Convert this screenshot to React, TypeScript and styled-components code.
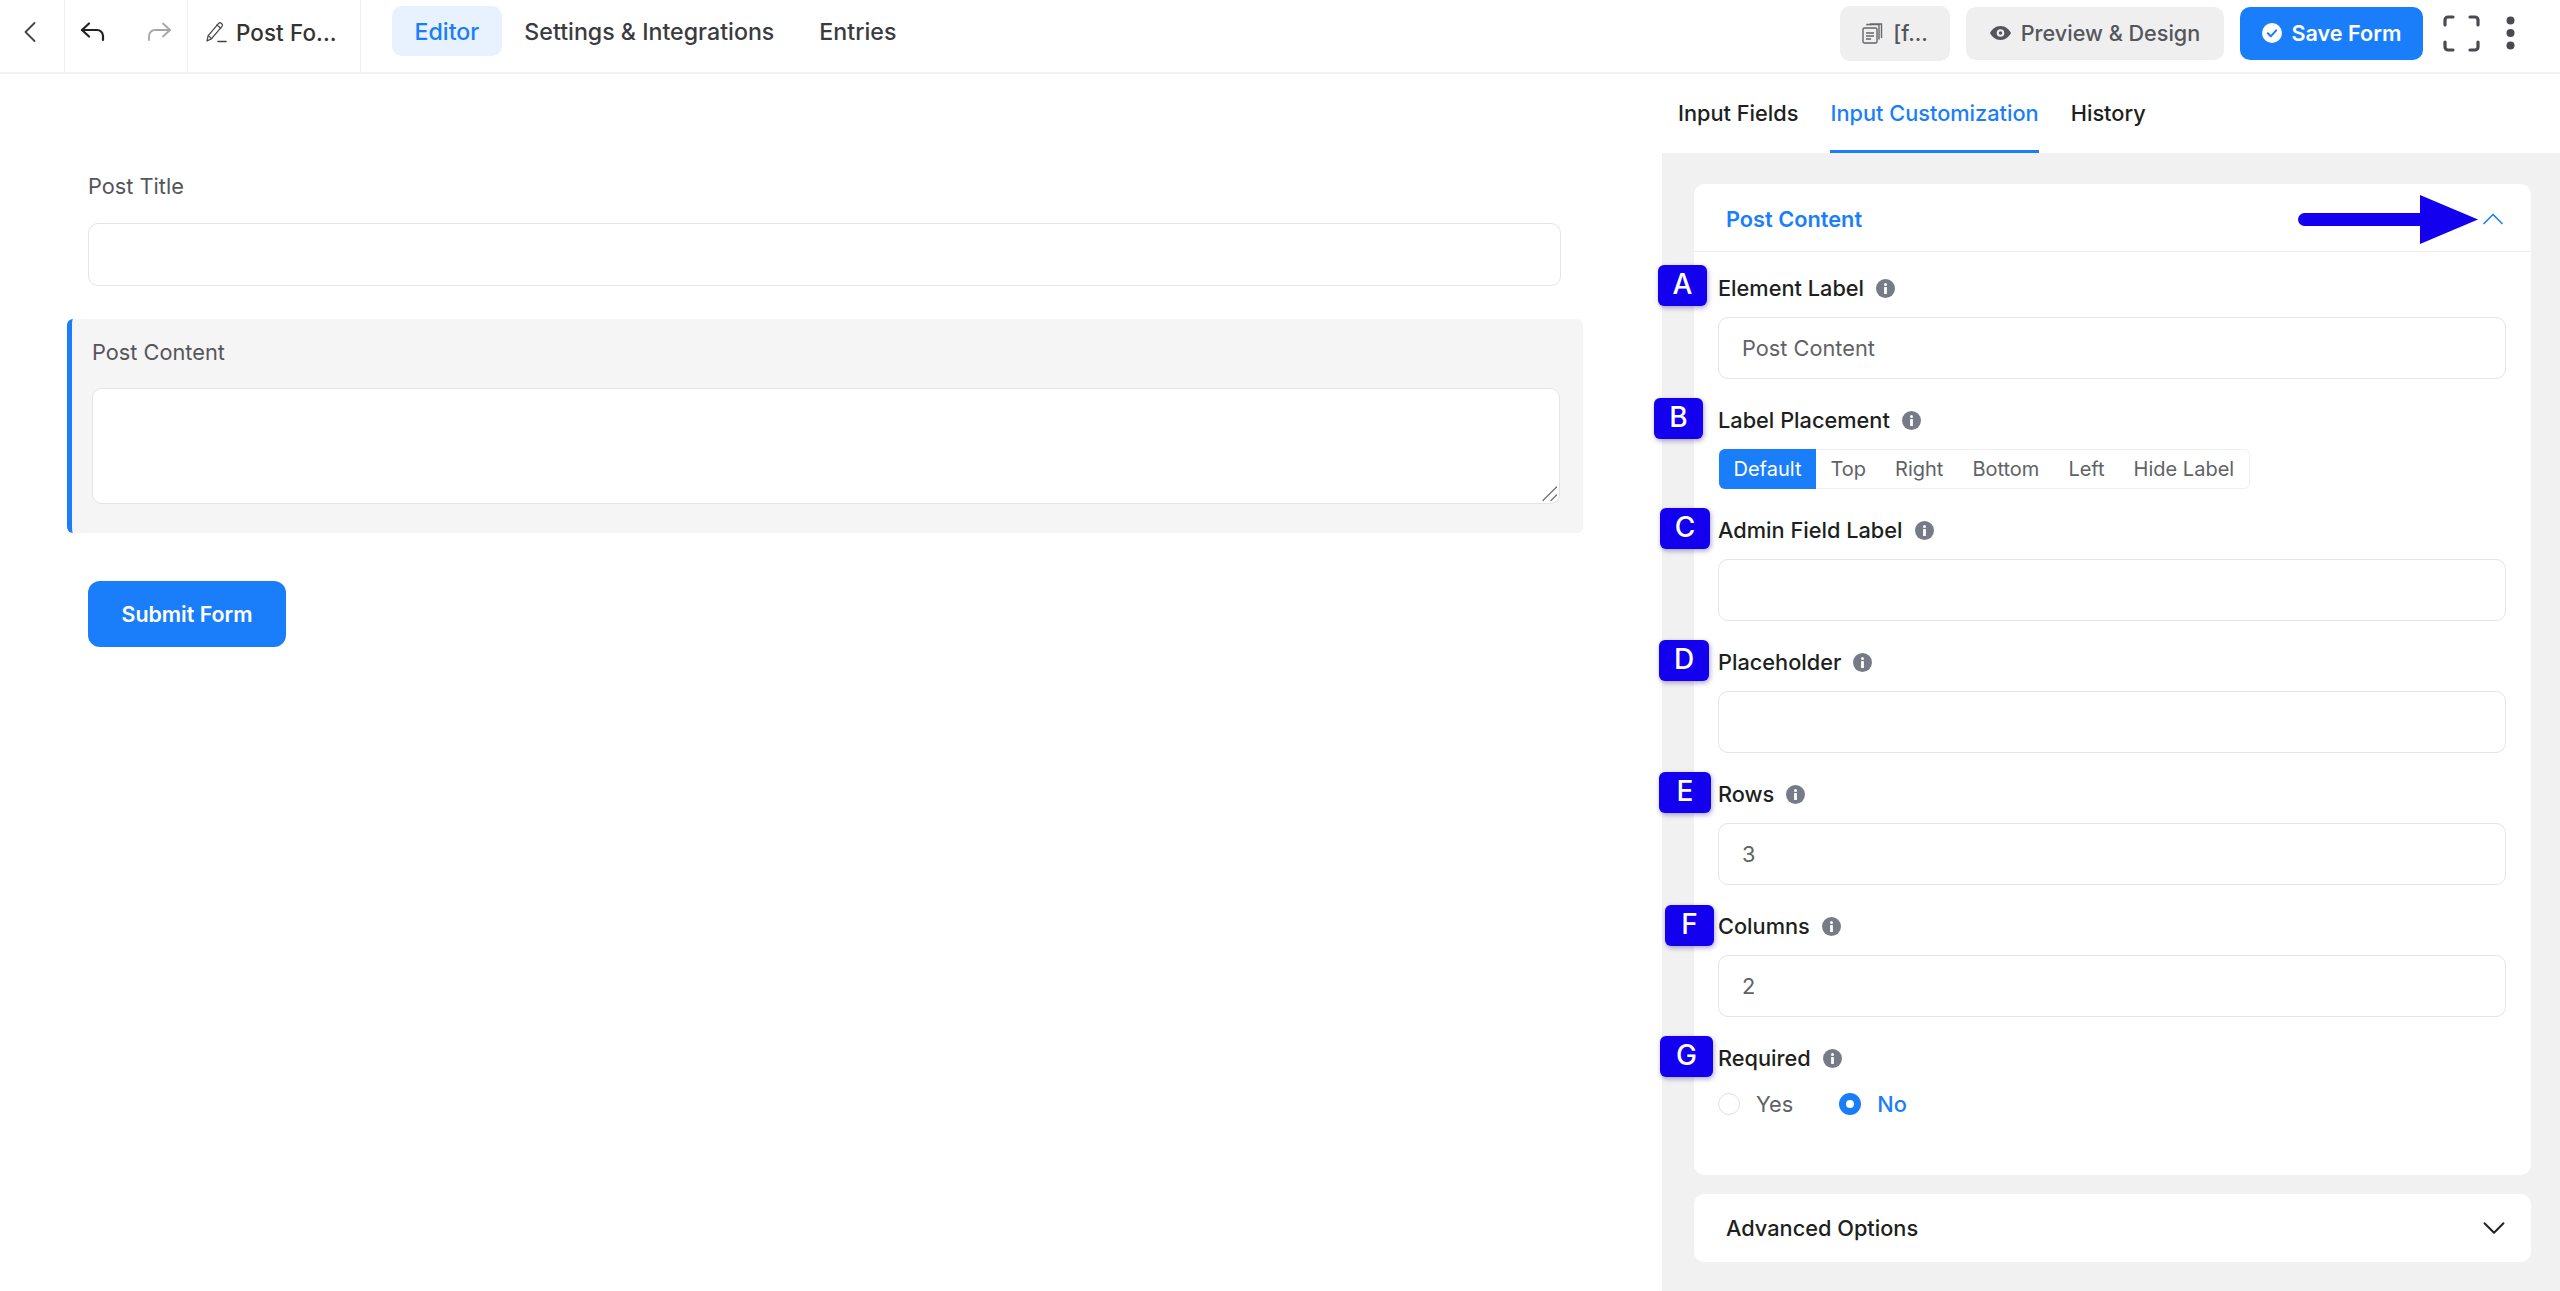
import React from "react";
import styled, { createGlobalStyle } from "styled-components";
import { ChevronLeft, ChevronUp, ChevronDown } from "lucide-react";

const Global = createGlobalStyle`
  html, body { margin: 0; padding: 0; height: 100%; background: #fff; overflow: hidden; }
  body { font-family: Inter, "Liberation Sans", sans-serif; color: #1e1f21; }
  * { box-sizing: border-box; }
`;

const Page = styled.div`display: flex; flex-direction: column; height: 100vh;`;

const Header = styled.header`
  display: flex; align-items: stretch; height: 74px; flex: none;
  border-bottom: 2px solid #f2f2f2; background: #fff;
`;
const HeaderCell = styled.div<{ $w: number; $gap?: number }>`
  width: ${p => p.$w}px; flex: none; display: flex; align-items: center;
  border-right: 1px solid #f0f0f0; gap: ${p => p.$gap ?? 0}px;
`;
const BackCell = styled(HeaderCell)`color: #444; padding: 0 0 8px 12px;`;
const HistoryCell = styled(HeaderCell)`padding: 0 0 9px 15px;`;
const TitleCell = styled(HeaderCell)`
  padding: 0 0 8px 17px;
  font-size: 22.4px; font-weight: 500; color: #333; letter-spacing: 0.1px;
`;
const Nav = styled.nav`display: flex; align-items: center; margin-left: 31px; gap: 0; padding-bottom: 10px;`;
const NavItem = styled.a<{ $active?: boolean }>`
  height: 50px; display: flex; align-items: center; padding: 2px 22.5px 0; border-radius: 10px;
  font-size: 23.2px; font-weight: 500;
  color: ${p => (p.$active ? "#1a7efb" : "#3b3b3f")};
  background: ${p => (p.$active ? "#e8f2ff" : "transparent")};
`;
const HeaderRight = styled.div`display: flex; align-items: center; margin-left: auto; padding: 0 45px 6px 0;`;
const GreyButton = styled.button<{ $w: number; $h?: number; $mr?: number }>`
  all: unset; box-sizing: border-box; display: flex; align-items: center; justify-content: center; gap: 10px;
  width: ${p => p.$w}px; height: ${p => p.$h ?? 53}px; margin-right: ${p => p.$mr ?? 16}px;
  background: #efefef; border-radius: 10px; color: #55565b; font-size: 21.6px; font-weight: 500;
`;
const SaveButton = styled.button`
  all: unset; box-sizing: border-box; display: flex; align-items: center; justify-content: center; gap: 10px;
  width: 183px; height: 53px; margin-right: 20px; border-radius: 10px;
  background: #1a7efb; color: #fff; font-size: 21.6px; font-weight: 600;
`;
const Dots = styled.svg`margin-left: 26px; flex: none;`;

const Main = styled.main`display: flex; flex: 1; min-height: 0;`;
const Canvas = styled.section`width: 1662px; flex: none; padding-top: 96px; background: #fff;`;
const FormField = styled.div`display: flex; flex-direction: column; gap: 20px; margin: 0 101px 33px 88px;`;
const FormLabel = styled.label`font-size: 21.76px; line-height: 33px; color: #55565b;`;
const FormInput = styled.input`
  height: 63px; width: 100%; border: 1px solid #e3e4e6; border-radius: 10px; background: #fff; outline: none;
`;
const SelectedField = styled.div`
  display: flex; flex-direction: column; gap: 19px;
  margin: 0 79px 48px 67px; padding: 17px 23px 30px 20px; height: 214px;
  background: #f5f5f5; border-left: 5px solid #1a7efb; border-radius: 6px;
`;
const AreaWrap = styled.div`position: relative; height: 116px; flex: none;`;
const FormArea = styled.textarea`
  height: 100%; width: 100%; border: 1px solid #e3e4e6; border-radius: 10px; background: #fff;
  outline: none; resize: none; display: block;
`;
const ResizeGrip = styled.svg`position: absolute; right: 2px; bottom: 2px;`;
const SubmitButton = styled.button`
  all: unset; box-sizing: border-box; display: flex; align-items: center; justify-content: center;
  width: 198px; height: 66px; margin-left: 88px; border-radius: 12px;
  background: #1a7efb; color: #fff; font-size: 21.4px; font-weight: 600;
`;

const Sidebar = styled.aside`flex: 1; display: flex; flex-direction: column; background: #f1f1f1;`;
const Tabs = styled.div`display: flex; height: 79px; flex: none; background: #fff; padding-left: 16px; gap: 32px;`;
const Tab = styled.a<{ $active?: boolean }>`
  display: flex; align-items: center; height: 79px; padding-top: 2px;
  font-size: 21.76px; font-weight: 500;
  color: ${p => (p.$active ? "#1a7efb" : "#1e1f21")};
  border-bottom: 3px solid ${p => (p.$active ? "#1a7efb" : "transparent")};
`;
const SideBody = styled.div`display: flex; flex-direction: column; gap: 19px; padding: 31px 29px 0 32px;`;
const Card = styled.div`position: relative; background: #fff; border-radius: 10px;`;
const CardHeader = styled.div`
  display: flex; align-items: center; justify-content: space-between; height: 68px;
  padding: 2px 20px 0 32px; border-bottom: 1px solid #eeeeee;
  font-size: 21.76px; font-weight: 600; color: #1a7efb;
`;
const Arrow = styled.svg`position: absolute; left: 604px; top: 11px;`;
const CardBody = styled.div`display: flex; flex-direction: column; gap: 26px; padding: 21px 25px 55px 24px;`;
const Field = styled.div`position: relative; display: flex; flex-direction: column; gap: 14px;`;
const LabelRow = styled.div`display: flex; align-items: center; gap: 12px; height: 30px; font-size: 21.76px; font-weight: 500; color: #1e1f21;`;
const TextInput = styled.input`
  height: 62.1px; width: 100%; padding: 0 23px; border: 1px solid #e3e4e6; border-radius: 10px; background: #fff;
  outline: none; font: 400 21.76px Inter, sans-serif; color: #606266;
`;
const Segments = styled.div`display: inline-flex; align-self: flex-start; height: 40px; margin-left: 1px; border: 1px solid #f0f0f0; border-radius: 6px;`;
const Segment = styled.span<{ $active?: boolean }>`
  display: flex; align-items: center; padding: 0 14.5px; font-size: 20px; margin: -1px 0;
  color: ${p => (p.$active ? "#fff" : "#606266")};
  background: ${p => (p.$active ? "#1a7efb" : "transparent")};
  border-radius: ${p => (p.$active ? "6px 0 0 6px" : "0")};
  margin-left: ${p => (p.$active ? "-1px" : "0")};
`;
const Radios = styled.div`display: flex; align-items: center; height: 32px; gap: 46px; margin-top: 1px;`;
const RadioItem = styled.label<{ $on?: boolean }>`
  display: flex; align-items: center; gap: 16px; font-size: 21.76px; font-weight: ${p => (p.$on ? 500 : 400)};
  color: ${p => (p.$on ? "#1a7efb" : "#606266")};
`;
const RadioMark = styled.span<{ $on?: boolean }>`
  width: 22px; height: 22px; border-radius: 50%; flex: none; background: #fff;
  border: ${p => (p.$on ? "7px solid #1a7efb" : "1px solid #dcdfe6")};
`;
const Badge = styled.span<{ $x: number; $y: number; $w: number }>`
  position: absolute; left: ${p => p.$x}px; top: ${p => p.$y}px; width: ${p => p.$w}px; height: 41px;
  display: flex; align-items: center; justify-content: center; padding-bottom: 4px;
  background: #1300ee; color: #fff; border-radius: 6px; font-size: 28px; font-weight: 500;
  box-shadow: 1px 2px 5px rgba(20, 0, 120, 0.35);
`;
const AdvancedCard = styled.div`
  display: flex; align-items: center; justify-content: space-between; height: 68px;
  padding: 0 18px 0 32px; background: #fff; border-radius: 10px;
  font-size: 21.76px; font-weight: 500; color: #1e1f21;
`;

const Info = () => (
  <svg width="19" height="19" viewBox="0 0 19 19" style={{ flex: "none" }}>
    <circle cx="9.5" cy="9.5" r="9.5" fill="#777b88" />
    <circle cx="9.5" cy="5.4" r="1.5" fill="#fff" />
    <rect x="8.1" y="8" width="2.8" height="7" rx="0.6" fill="#fff" />
  </svg>
);

const UndoIcon = ({ flip, color, sw }: { flip?: boolean; color: string; sw: number }) => (
  <svg width="25" height="20" viewBox="0 0 25 20" fill="none" stroke={color} strokeWidth={sw} strokeLinecap="round" strokeLinejoin="round"
    transform={flip ? "scale(-1 1)" : undefined}>
    <path d="M9 1.5L2 8l7 6.5" />
    <path d="M2 8h15a6 6 0 0 1 6 6v4" />
  </svg>
);

const PencilIcon = () => (
  <svg width="22" height="22" viewBox="0 0 22 22" fill="none" stroke="#444" strokeWidth="1.2" strokeLinecap="round" strokeLinejoin="round" style={{ flex: "none" }}>
    <path d="M2 20l1.2-5.4L13.6 2.4a1.8 1.8 0 0 1 2.5-.2l.7.6a1.8 1.8 0 0 1 .2 2.5L6.6 17.6z" />
    <path d="M12 3.9l3.7 3.3M3.3 14.6l3.3 3" />
    <path d="M13 20.5h8" strokeWidth="1.6" />
  </svg>
);

const DocIcon = () => (
  <svg width="21" height="21" viewBox="0 0 21 21" fill="none" stroke="#66676c" strokeWidth="1.4">
    <rect x="1" y="5" width="14" height="15" rx="1.5" />
    <path d="M5 2.5V1.5h12v15M8.5 2.5V1h11v14" />
    <path d="M4 10h8M4 13h8M4 16h5" />
  </svg>
);

const EyeIcon = () => (
  <svg width="21" height="14" viewBox="0 0 21 14">
    <path fillRule="evenodd" fill="#55565b" d="M10.5 0C15.5 0 19.3 3.4 21 7c-1.7 3.6-5.5 7-10.5 7S1.7 10.6 0 7C1.7 3.4 5.5 0 10.5 0Zm0 3.2a3.8 3.8 0 1 0 0 7.6 3.8 3.8 0 0 0 0-7.6Z" />
    <circle cx="10.5" cy="7" r="1.7" fill="#55565b" />
  </svg>
);

const CheckBadge = () => (
  <svg width="20" height="20" viewBox="0 0 20 20">
    <circle cx="10" cy="10" r="10" fill="#fff" />
    <path d="M5.8 10.3l3 3 5.4-6" fill="none" stroke="#1a7efb" strokeWidth="2" strokeLinecap="round" strokeLinejoin="round" />
  </svg>
);

const Corners = () => (
  <svg width="37" height="37" viewBox="0 0 37 37" fill="none" stroke="#4a4b50" strokeWidth="3.2" strokeLinecap="round" style={{ flex: "none" }}>
    <path d="M2 10V5a3 3 0 0 1 3-3h5" />
    <path d="M27 2h5a3 3 0 0 1 3 3v5" />
    <path d="M35 27v5a3 3 0 0 1-3 3h-5" />
    <path d="M10 35H5a3 3 0 0 1-3-3v-5" />
  </svg>
);

type FieldSpec = { badge: string; x: number; y: number; w: number; label: string; value?: string };
const fields: FieldSpec[] = [
  { badge: "A", x: -60, y: -8, w: 49, label: "Element Label", value: "Post Content" },
  { badge: "B", x: -64, y: -7, w: 49, label: "Label Placement" },
  { badge: "C", x: -58, y: -7, w: 50, label: "Admin Field Label", value: "" },
  { badge: "D", x: -59, y: -7, w: 50, label: "Placeholder", value: "" },
  { badge: "E", x: -59, y: -7, w: 52, label: "Rows", value: "3" },
  { badge: "F", x: -53, y: -6, w: 49, label: "Columns", value: "2" },
  { badge: "G", x: -58, y: -7, w: 53, label: "Required" },
];
const placements = ["Default", "Top", "Right", "Bottom", "Left", "Hide Label"];

export default function App() {
  return (
    <Page>
      <Global />
      <Header>
        <BackCell $w={65}>
          <ChevronLeft size={36} strokeWidth={1.2} />
        </BackCell>
        <HistoryCell $w={123} $gap={42}>
          <UndoIcon color="#222" sw={2.2} />
          <UndoIcon flip color="#a6a6a6" sw={1.8} />
        </HistoryCell>
        <TitleCell $w={173} $gap={9}>
          <PencilIcon />
          Post Fo...
        </TitleCell>
        <Nav>
          <NavItem $active>Editor</NavItem>
          <NavItem>Settings &amp; Integrations</NavItem>
          <NavItem>Entries</NavItem>
        </Nav>
        <HeaderRight>
          <GreyButton $w={110} $h={55}>
            <DocIcon />
            [f...
          </GreyButton>
          <GreyButton $w={258}>
            <EyeIcon />
            Preview &amp; Design
          </GreyButton>
          <SaveButton>
            <CheckBadge />
            Save Form
          </SaveButton>
          <Corners />
          <Dots width="9" height="34" viewBox="0 0 9 34" fill="#4a4b50">
            <circle cx="4.5" cy="4.5" r="4" />
            <circle cx="4.5" cy="17" r="4" />
            <circle cx="4.5" cy="29.5" r="4" />
          </Dots>
        </HeaderRight>
      </Header>
      <Main>
        <Canvas>
          <FormField>
            <FormLabel>Post Title</FormLabel>
            <FormInput readOnly />
          </FormField>
          <SelectedField>
            <FormLabel>Post Content</FormLabel>
            <AreaWrap>
              <FormArea readOnly />
              <ResizeGrip width="17" height="17" viewBox="0 0 17 17" stroke="#6f6f6f" strokeWidth="1.3" strokeLinecap="round">
                <path d="M2 15.5L15.5 2" />
                <path d="M10 15.5L15.5 10" />
              </ResizeGrip>
            </AreaWrap>
          </SelectedField>
          <SubmitButton>Submit Form</SubmitButton>
        </Canvas>
        <Sidebar>
          <Tabs>
            <Tab>Input Fields</Tab>
            <Tab $active>Input Customization</Tab>
            <Tab>History</Tab>
          </Tabs>
          <SideBody>
            <Card>
              <CardHeader>
                Post Content
                <ChevronUp size={36} strokeWidth={1.1} />
              </CardHeader>
              <Arrow width="180" height="49" viewBox="0 0 180 49">
                <rect x="0" y="18" width="130" height="13" rx="6.5" fill="#1300ee" />
                <path d="M122 0L180 24.5L122 49Z" fill="#1300ee" />
              </Arrow>
              <CardBody>
                {fields.map(f => (
                  <Field key={f.badge}>
                    <Badge $x={f.x} $y={f.y} $w={f.w}>{f.badge}</Badge>
                    <LabelRow>
                      {f.label}
                      <Info />
                    </LabelRow>
                    {f.badge === "B" && (
                      <Segments>
                        {placements.map((s, i) => (
                          <Segment key={s} $active={i === 0}>{s}</Segment>
                        ))}
                      </Segments>
                    )}
                    {f.badge === "G" && (
                      <Radios>
                        <RadioItem><RadioMark />Yes</RadioItem>
                        <RadioItem $on><RadioMark $on />No</RadioItem>
                      </Radios>
                    )}
                    {f.value !== undefined && <TextInput readOnly value={f.value} />}
                  </Field>
                ))}
              </CardBody>
            </Card>
            <AdvancedCard>
              Advanced Options
              <ChevronDown size={38} strokeWidth={1.2} />
            </AdvancedCard>
          </SideBody>
        </Sidebar>
      </Main>
    </Page>
  );
}
